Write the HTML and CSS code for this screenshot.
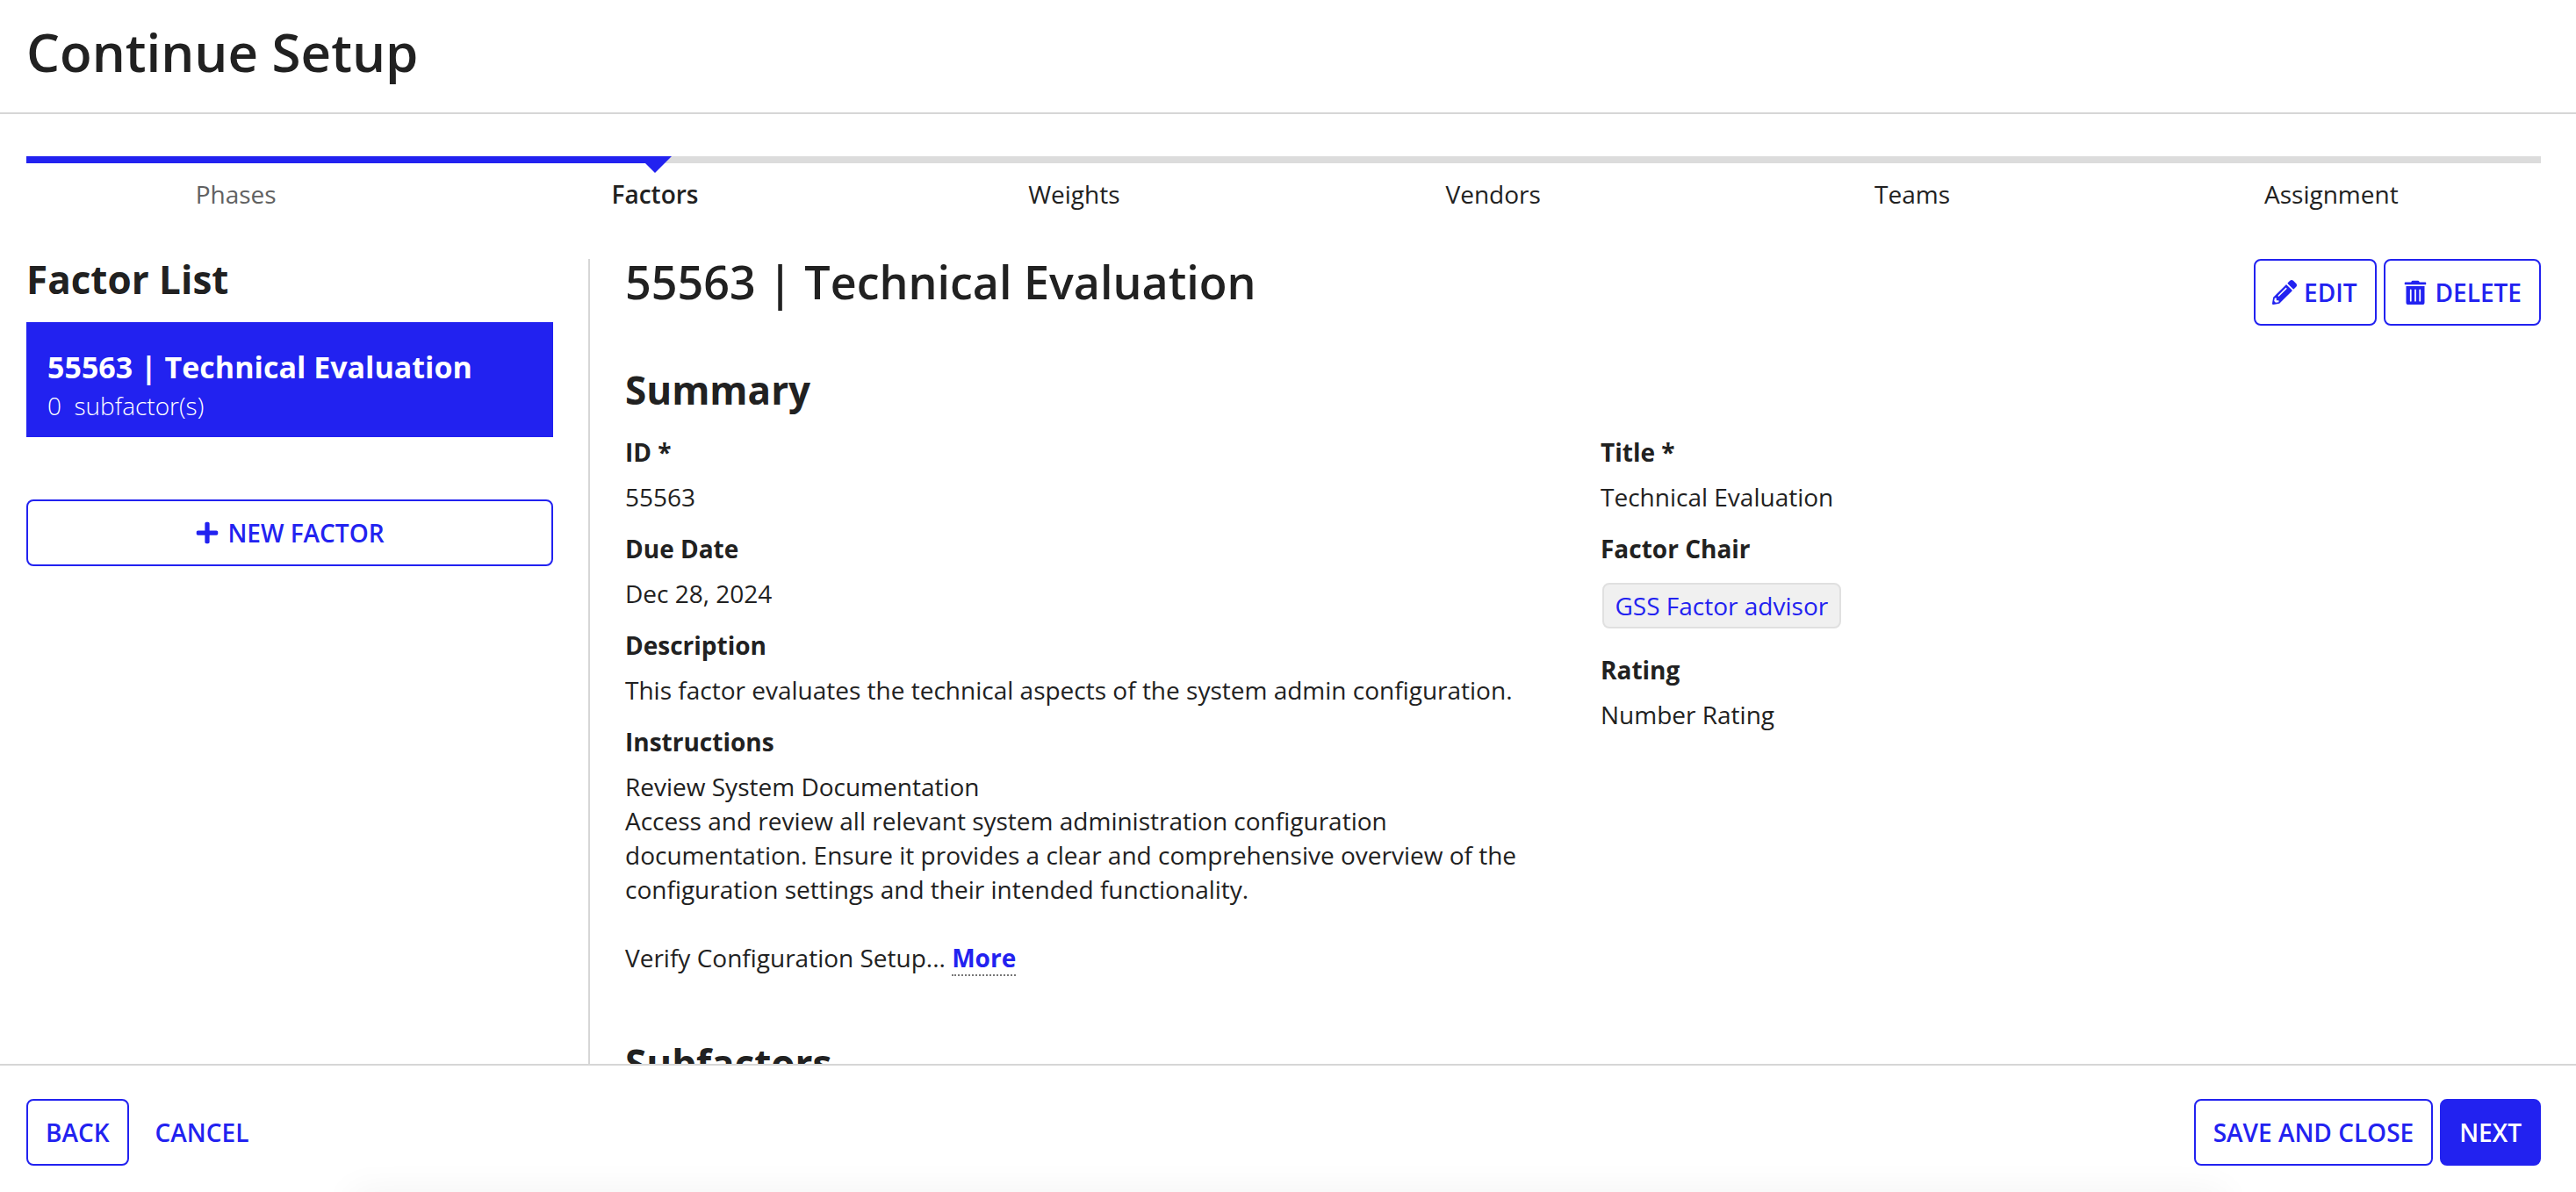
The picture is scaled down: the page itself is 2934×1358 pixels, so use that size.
FILE: index.html
```html
<!DOCTYPE html>
<html lang="en">

<head>
    <meta charset="UTF-8" />
    <meta name="viewport" content="width=device-width, initial-scale=1.0" />
    <title>Continue Setup</title>
    <link rel="stylesheet" href="styles.css">
</head>

<body>
    <header class="page-header">
        <h1>Continue Setup</h1>
    </header>

    <div class="stepper">
        <div class="stepper-track">
            <div class="stepper-fill" style="width: 25%"></div>
        </div>
        <div class="stepper-labels">
            <span class="done">Phases</span>
            <span class="active">Factors</span>
            <span>Weights</span>
            <span>Vendors</span>
            <span>Teams</span>
            <span>Assignment</span>
        </div>
    </div>

    <div class="content">
        <aside class="sidebar">
            <h2>Factor List</h2>
            <div class="factor-card">
                <div class="factor-card-title">55563 | Technical Evaluation</div>
                <div class="factor-card-sub">0&nbsp; subfactor(s)</div>
            </div>
            <button class="btn btn-wide">
                <svg class="icon" viewBox="0 0 448 512"><path d="M416 208H272V64c0-17.67-14.33-32-32-32h-32c-17.67 0-32 14.33-32 32v144H32c-17.67 0-32 14.33-32 32v32c0 17.67 14.33 32 32 32h144v144c0 17.67 14.33 32 32 32h32c17.67 0 32-14.33 32-32V304h144c17.67 0 32-14.33 32-32v-32c0-17.67-14.33-32-32-32z"/></svg>
                NEW FACTOR
            </button>
        </aside>

        <main class="detail">
            <div class="detail-head">
                <h2 class="detail-title">55563 | Technical Evaluation</h2>
                <div class="detail-actions">
                    <button class="btn btn-edit">
                        <svg class="icon" viewBox="0 0 512 512"><path d="M497.9 142.1l-46.1 46.1c-4.7 4.7-12.3 4.7-17 0l-111-111c-4.7-4.7-4.7-12.3 0-17l46.1-46.1c18.7-18.7 49.1-18.7 67.9 0l60.1 60.1c18.8 18.7 18.8 49.1 0 67.9zM284.2 99.8L21.6 362.4.4 483.9c-2.9 16.4 11.4 30.6 27.8 27.8l121.5-21.3 262.6-262.6c4.7-4.7 4.7-12.3 0-17l-111-111c-4.8-4.7-12.4-4.7-17.1 0zM124.1 339.9c-5.5-5.5-5.5-14.3 0-19.8l154-154c5.5-5.5 14.3-5.5 19.8 0s5.5 14.3 0 19.8l-154 154c-5.5 5.5-14.3 5.5-19.8 0zM88 424h48v36.3l-64.5 11.3-31.1-31.1L51.7 376H88v48z"/></svg>
                        EDIT
                    </button>
                    <button class="btn">
                        <svg class="icon" viewBox="0 0 448 512"><path d="M32 464a48 48 0 0 0 48 48h288a48 48 0 0 0 48-48V128H32zm272-256a16 16 0 0 1 32 0v224a16 16 0 0 1-32 0zm-96 0a16 16 0 0 1 32 0v224a16 16 0 0 1-32 0zm-96 0a16 16 0 0 1 32 0v224a16 16 0 0 1-32 0zM432 44H312l-9.4-18.7A24 24 0 0 0 281.1 12H166.8a23.72 23.72 0 0 0-21.4 13.3L136 44H16A16 16 0 0 0 0 60v20a16 16 0 0 0 16 16h416a16 16 0 0 0 16-16V60a16 16 0 0 0-16-16z"/></svg>
                        DELETE
                    </button>
                </div>
            </div>

            <h2 class="section-title">Summary</h2>
            <div class="fields">
                <div class="field-col">
                    <div class="field">
                        <div class="field-label">ID *</div>
                        <div class="field-value">55563</div>
                    </div>
                    <div class="field">
                        <div class="field-label">Due Date</div>
                        <div class="field-value">Dec 28, 2024</div>
                    </div>
                    <div class="field">
                        <div class="field-label">Description</div>
                        <div class="field-value">This factor evaluates the technical aspects of the system admin configuration.</div>
                    </div>
                    <div class="field">
                        <div class="field-label">Instructions</div>
                        <div class="field-value">
                            Review System Documentation<br>
                            Access and review all relevant system administration configuration documentation. Ensure it provides a clear and comprehensive overview of the configuration settings and their intended functionality.<br><br>
                            Verify Configuration Setup... <a class="more-link" href="#">More</a>
                        </div>
                    </div>
                </div>
                <div class="field-col">
                    <div class="field">
                        <div class="field-label">Title *</div>
                        <div class="field-value">Technical Evaluation</div>
                    </div>
                    <div class="field">
                        <div class="field-label">Factor Chair</div>
                        <div class="chip">GSS Factor advisor</div>
                    </div>
                    <div class="field">
                        <div class="field-label">Rating</div>
                        <div class="field-value">Number Rating</div>
                    </div>
                </div>
            </div>

            <h2 class="section-title subfactors">Subfactors</h2>
        </main>
    </div>

    <footer class="page-footer">
        <div class="footer-group">
            <button class="btn">BACK</button>
            <button class="btn btn-link">CANCEL</button>
        </div>
        <div class="footer-group">
            <button class="btn">SAVE AND CLOSE</button>
            <button class="btn btn-primary">NEXT</button>
        </div>
        <div class="footer-shadow"></div>
    </footer>
</body>

</html>
```

FILE: styles.css
```css
* {
    box-sizing: border-box;
}

html,
body {
    height: 100%;
}

body {
    margin: 0;
    display: flex;
    flex-direction: column;
    overflow: hidden;
    font-family: "Open Sans", sans-serif;
    font-size: 28px;
    line-height: 39px;
    color: #212121;
    background-color: #fff;
}

h1,
h2 {
    margin: 0;
}

.page-header {
    flex: none;
    height: 130px;
    padding: 23px 30px 0;
    border-bottom: 2px solid #d6d6d6;
}

.page-header h1 {
    font-size: 60px;
    line-height: 72px;
    font-weight: 600;
}

.stepper {
    flex: none;
    padding: 48px 40px 0 30px;
}

.stepper-track {
    height: 8px;
    background-color: #dcdcdc;
}

.stepper-fill {
    position: relative;
    height: 8px;
    background-color: #2222f0;
}

/* little arrow under the current step */
.stepper-fill::after {
    content: "";
    position: absolute;
    right: -19px;
    top: 0;
    border-left: 19px solid transparent;
    border-right: 19px solid transparent;
    border-top: 19px solid #2222f0;
}

.stepper-labels {
    display: grid;
    grid-template-columns: repeat(6, 1fr);
    margin-top: 16px;
    text-align: center;
}

.stepper-labels .done {
    color: #616161;
}

.stepper-labels .active {
    font-weight: 600;
}

.content {
    flex: 1;
    min-height: 0;
    display: flex;
    padding: 54px 40px 0 30px;
    overflow: hidden;
}

.sidebar {
    flex: none;
    width: 642px;
    padding-right: 40px;
    border-right: 2px solid #d6d6d6;
}

.sidebar h2 {
    font-size: 44px;
    line-height: 46px;
    font-weight: 700;
}

.factor-card {
    height: 131px;
    margin-top: 26px;
    padding: 28px 24px 0;
    background-color: #2222f0;
    color: #fff;
}

.factor-card-title {
    font-size: 34px;
    line-height: 46px;
    font-weight: 700;
}

.factor-card-sub {
    margin-top: 2px;
    font-weight: 300;
}

.btn {
    display: inline-flex;
    align-items: center;
    justify-content: center;
    gap: 9px;
    height: 76px;
    padding: 0 20px;
    border: 2px solid #2222f0;
    border-radius: 8px;
    background-color: #fff;
    color: #2222f0;
    font-family: inherit;
    font-size: 28px;
    font-weight: 600;
    cursor: pointer;
}

.btn-wide {
    width: 100%;
    margin-top: 71px;
}

.btn-edit {
    gap: 8px;
    padding: 0 20px 0 19px;
}

.btn-link {
    border-color: transparent;
}

.btn-primary {
    background-color: #2222f0;
    color: #fff;
}

.icon {
    width: 28px;
    height: 28px;
    fill: currentColor;
}

.detail {
    flex: 1;
    min-width: 0;
    padding-left: 40px;
}

.detail-head {
    display: flex;
    justify-content: space-between;
    align-items: flex-start;
}

.detail-title {
    font-size: 52px;
    line-height: 52px;
    font-weight: 600;
}

.detail-actions {
    display: flex;
    gap: 8px;
}

.section-title {
    font-size: 44px;
    line-height: 60px;
    font-weight: 700;
    margin-top: 43px;
}

.fields {
    display: grid;
    grid-template-columns: 1fr 1fr;
    gap: 40px;
    margin-top: 22px;
}

.field {
    margin-bottom: 20px;
}

.field-label {
    font-weight: 700;
}

.field-value {
    margin-top: 12px;
    padding-right: 20px;
}

.chip {
    display: inline-block;
    height: 52px;
    margin: 19px 0 8px 2px;
    padding: 0 12.5px;
    border: 2px solid #e0e0e0;
    border-radius: 8px;
    background-color: #f0f0f0;
    color: #2222f0;
    line-height: 48px;
}

.more-link {
    font-weight: 700;
    color: #2222f0;
    text-decoration: none;
    border-bottom: 2px dotted #777;
}

.subfactors {
    margin-top: 50px;
}

.page-footer {
    position: relative;
    flex: none;
    display: flex;
    justify-content: space-between;
    height: 146px;
    padding: 38px 40px 0 30px;
    border-top: 2px solid #d6d6d6;
    background-color: #fff;
}

.footer-group {
    display: flex;
    gap: 8px;
}

/* faint shadow coming up from below the window */
.footer-shadow {
    position: absolute;
    left: 400px;
    right: 400px;
    bottom: -30px;
    height: 30px;
    box-shadow: 0 0 40px rgba(0, 0, 0, 0.06);
}
```
